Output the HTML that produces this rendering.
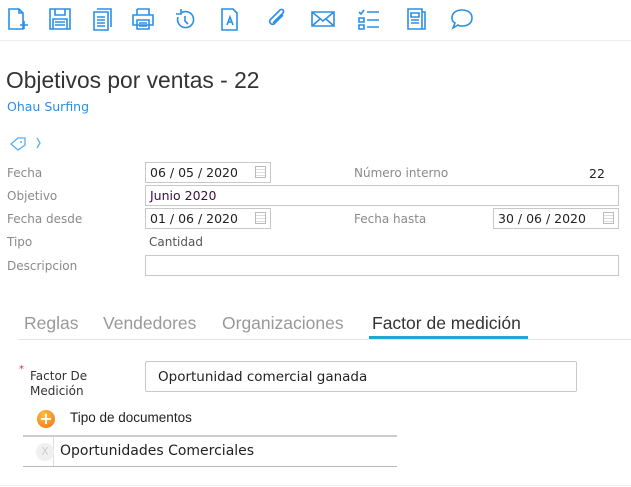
<!DOCTYPE html>
<html><head><meta charset="utf-8"><style>
body{margin:0;width:631px;height:487px;background:#fff;font-family:"DejaVu Sans","Liberation Sans",sans-serif;position:relative;overflow:hidden;color:#333}
.a{position:absolute;white-space:nowrap}
.lbl{font-size:12px;color:#8a8a8a}
.inp{position:absolute;border:1px solid #c8c8c8;box-sizing:border-box;height:21px;font-size:12.5px;color:#222;padding:2px 4px}
.cal{position:absolute;right:4px;top:3px;width:11px;height:12px;border:1px solid #bbb;box-sizing:border-box;background:repeating-linear-gradient(#fff 0 2px,#ddd 2px 3px)}
svg.i{position:absolute;top:7px;width:24px;height:24px;fill:none;stroke:#2a8fe6;stroke-width:1.6}
.tab{position:absolute;top:313px;font-size:17.5px;color:#999;font-family:'Liberation Sans',sans-serif;white-space:nowrap}
</style></head><body>
<svg class="i" style="left:6px" viewBox="0 0 24 24"><path d="M3 2h10l4 4v16H3z M13 2v4h4 M14 18h8 M18 14v8"/></svg>
<svg class="i" style="left:48px" viewBox="0 0 24 24"><path d="M2 2h20v20H2z M7 2v6h10V2 M5 12h14v10H5z M7 15h10 M7 18h10"/></svg>
<svg class="i" style="left:91px" viewBox="0 0 24 24"><path d="M6 2h14v18 M3 5h14v18H3z M6 10h8 M6 13h8 M6 16h8 M6 19h8"/></svg>
<svg class="i" style="left:131px" viewBox="0 0 24 24"><path d="M6 2h12v6 M6 8V2 M2 8h20v10H2z M6 13h12v9H6z M8 16h8 M8 19h8"/></svg>
<svg class="i" style="left:173px" viewBox="0 0 24 24"><path d="M8 6a8 8 0 1 1-3 4 M8 2v5H3 M12 9v5l3 3"/></svg>
<svg class="i" style="left:218px" viewBox="0 0 24 24"><path d="M4 2h11l4 4v17H4z M9 18l3-8 3 8 M10 15h4"/></svg>
<svg class="i" style="left:264px" viewBox="0 0 24 24"><path d="M19 8l-9 9a3 3 0 0 1-4-4l10-10a2 2 0 0 1 3 3l-10 10"/></svg>
<svg class="i" style="left:311px" viewBox="0 0 24 24"><path d="M1 5h22v14H1z M1 5l11 9 11-9 M1 19l8-7 M23 19l-8-7"/></svg>
<svg class="i" style="left:357px" viewBox="0 0 24 24"><path d="M2 5l2 2 3-4 M2 11h5v4H2z M2 18h5v4H2z M10 5h12 M10 13h12 M10 20h12"/></svg>
<svg class="i" style="left:404px" viewBox="0 0 24 24"><path d="M4 2h14v20H4z M18 5h3v17H4 M7 6h8v4H7z M7 13h8 M7 16h8"/></svg>
<svg class="i" style="left:450px" viewBox="0 0 24 24"><path d="M12 3c6 0 10 3 10 8s-4 8-10 8c-2 0-3 0-4-1l-5 3 2-5c-2-1-3-3-3-5 0-5 4-8 10-8z"/></svg>
<div class="a" style="left:0;top:40px;width:631px;border-top:1px solid #eee"></div>
<div class="a" style="left:6px;top:67px;font-size:22.8px;color:#333;font-family:'Liberation Sans',sans-serif">Objetivos por ventas - 22</div>
<div class="a" style="left:7px;top:99px;font-size:12.5px;color:#2a8fe6">Ohau Surfing</div>
<svg class="a" style="left:8px;top:135px" width="40" height="16" viewBox="0 0 40 16"><path d="M3 9l7-6h7v7l-7 5z" fill="none" stroke="#5aaef0" stroke-width="1.3"/><circle cx="13" cy="7" r="1" fill="#5aaef0"/><path d="M29 3l3 5-3 5" fill="none" stroke="#5aaef0" stroke-width="1.3"/></svg>
<div class="a lbl" style="left:7px;top:166px">Fecha</div>
<div class="a lbl" style="left:7px;top:189px">Objetivo</div>
<div class="a lbl" style="left:7px;top:212px">Fecha desde</div>
<div class="a lbl" style="left:7px;top:235px">Tipo</div>
<div class="a lbl" style="left:7px;top:259px">Descripcion</div>
<div class="inp" style="left:145px;top:162px;width:126px">06 / 05 / 2020<span class="cal"></span></div>
<div class="inp" style="left:145px;top:185px;width:474px;color:#3a1040">Junio 2020</div>
<div class="inp" style="left:145px;top:208px;width:126px">01 / 06 / 2020<span class="cal"></span></div>
<div class="inp" style="left:493px;top:208px;width:126px">30 / 06 / 2020<span class="cal"></span></div>
<div class="inp" style="left:145px;top:255px;width:474px"></div>
<div class="a lbl" style="left:354px;top:166px">Número interno</div>
<div class="a" style="left:589px;top:166px;font-size:12.5px;color:#222">22</div>
<div class="a lbl" style="left:354px;top:212px">Fecha hasta</div>
<div class="a" style="left:149px;top:235px;font-size:12px;color:#555">Cantidad</div>
<div class="a" style="left:18px;top:339px;width:613px;border-top:1px solid #e4e4e4"></div>
<div class="tab" style="left:24px">Reglas</div>
<div class="tab" style="left:103px">Vendedores</div>
<div class="tab" style="left:222px">Organizaciones</div>
<div class="tab" style="left:372px;color:#333">Factor de medición</div>
<div class="a" style="left:369px;top:336px;width:159px;height:3px;background:#22a8cf"></div>
<div class="a" style="left:19px;top:364px;font-size:10px;color:#d33">*</div>
<div class="a" style="left:30px;top:369px;font-size:12px;color:#333;line-height:15px">Factor De<br>Medición</div>
<div class="inp" style="left:145px;top:361px;width:432px;height:31px;border-radius:2px;padding:7px 12px;font-size:13.5px">Oportunidad comercial ganada</div>
<div class="a" style="left:37px;top:410px;width:18px;height:18px;border-radius:50%;background:radial-gradient(circle at 40% 30%,#ffc040,#f07010);color:#fff;font-size:16px;font-weight:bold;text-align:center;line-height:18px">+</div>
<div class="a" style="left:70px;top:410px;font-size:13.5px;color:#222;font-family:'Liberation Sans',sans-serif">Tipo de documentos</div>
<div class="a" style="left:23px;top:435px;width:374px;border-top:2px solid #ccc"></div>
<div class="a" style="left:53px;top:437px;height:29px;border-left:1px solid #ddd"></div>
<div class="a" style="left:36px;top:443px;width:18px;height:18px;border-radius:50%;background:#f0f0f0;color:#ccc;font-size:11px;text-align:center;line-height:18px">X</div>
<div class="a" style="left:60px;top:443px;font-size:14px;color:#222">Oportunidades Comerciales</div>
<div class="a" style="left:23px;top:466px;width:374px;border-top:1px solid #bbb"></div>
<div class="a" style="left:0;top:485px;width:631px;border-top:1px solid #eee"></div>
</body></html>
